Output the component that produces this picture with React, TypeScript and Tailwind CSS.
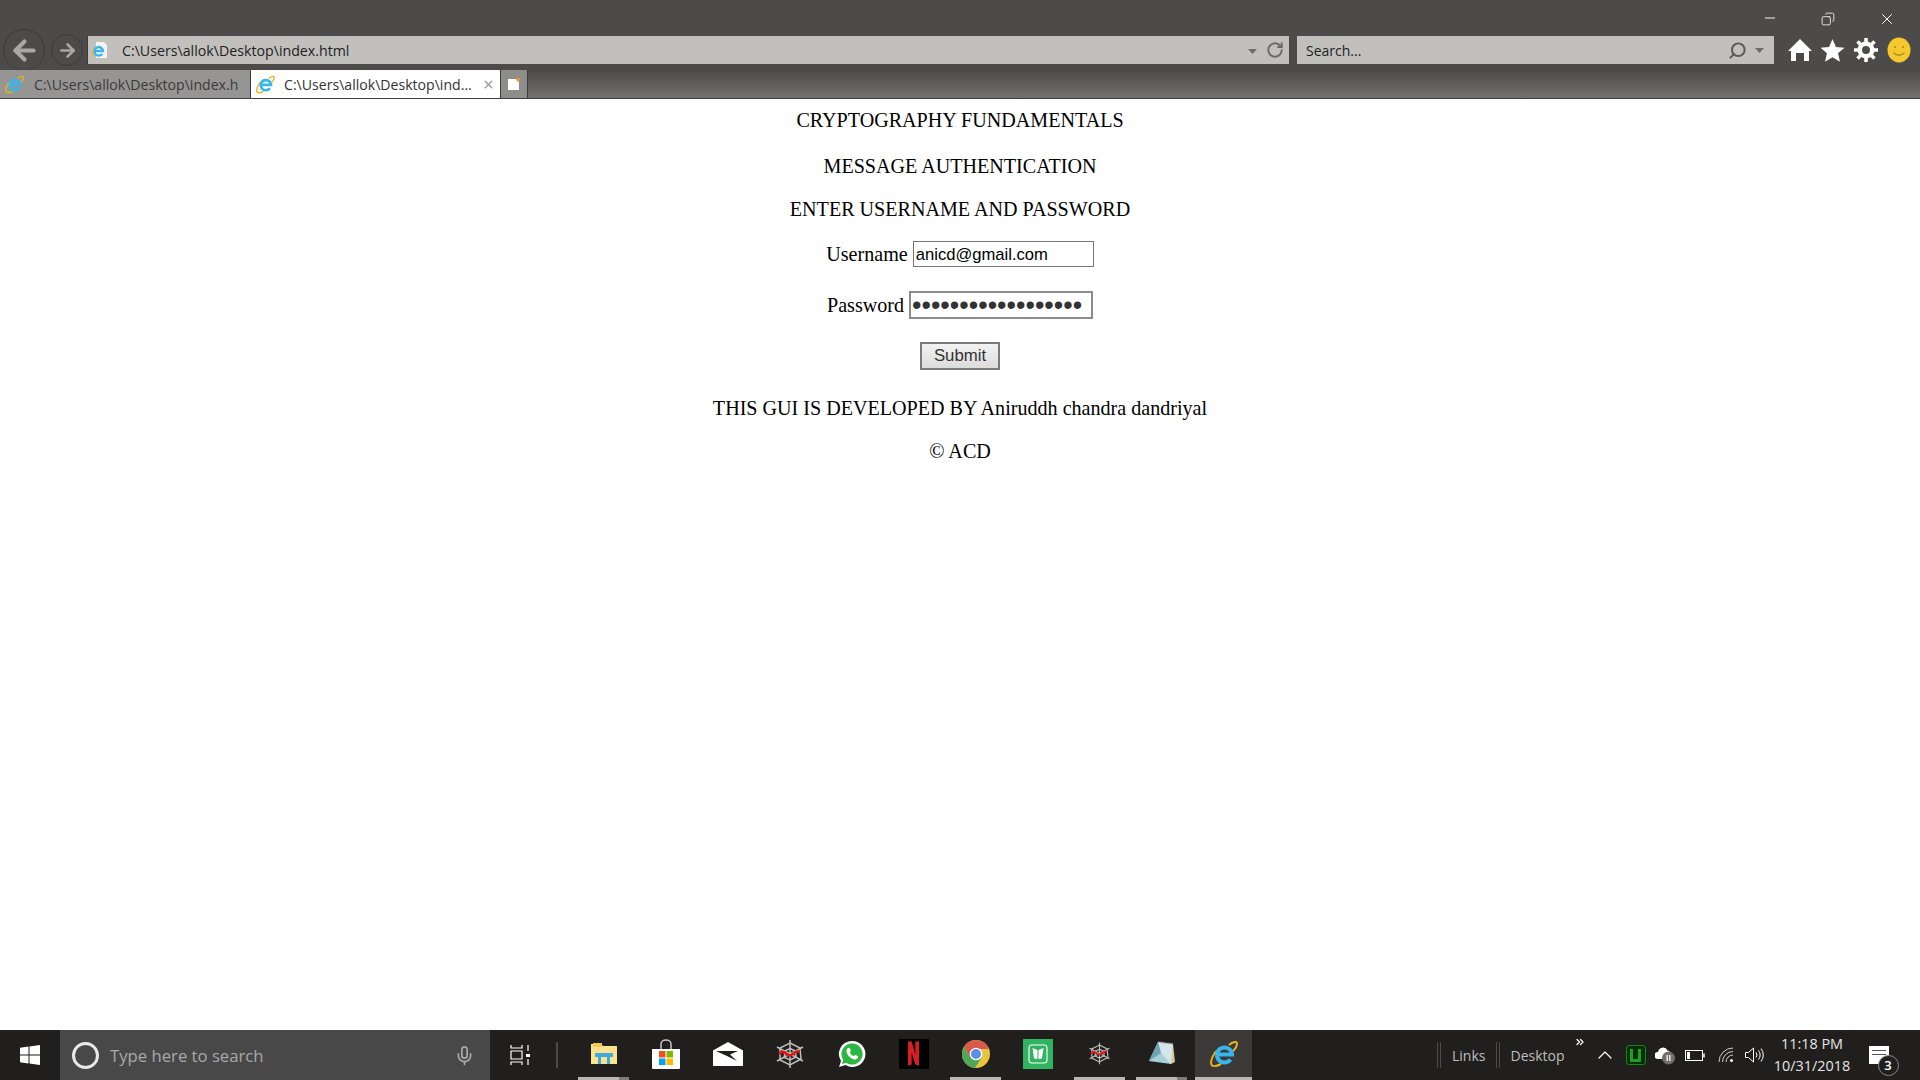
import React from 'react';
import { ArrowLeft, ArrowRight, RotateCw, Search, X, Copy, Minus, ChevronUp, ChevronsRight, Mic } from 'lucide-react';

const SANS = "font-['Open_Sans','Noto_Sans',sans-serif]";

const IeIcon = ({ size = 20 }: { size?: number }) => (
  <svg width={size} height={size} viewBox="0 0 28 28" className="shrink-0">
    <path d="M19 5C23 1.500 27 1 27 3.500 27 6 25 9 23 11M6 11C2 17 0 23 2 25.500 4 27 8 25.500 11 24" fill="none" stroke="#e8b321" strokeWidth="2" />
    <path d="M7.500 14.500H22A7.500 7.500 0 1 0 20.500 19.500" fill="none" stroke="#38b6ec" strokeWidth="4" />
  </svg>
);

const WebIcon = ({ size = 30 }: { size?: number }) => (
  <svg width={size} height={size} viewBox="0 0 30 30">
    <g fill="none" stroke="#bdbdbd" strokeWidth="1.500">
      <path d="M15 1v28M2 8l26 14M28 8 2 22" />
      <path d="M15 4 25 9 26 20 15 26 5 21 5 9z" />
      <path d="M15 9.500 20.500 12 21 18 15 21 9.500 18.500 9.500 12z" />
    </g>
    <path d="M4 15c3-3 5-2.500 7-.5s3.500 3 6 1 5-4 8-3" fill="none" stroke="#e01414" strokeWidth="2.600" />
  </svg>
);

const Tab = ({ active, label, close }: { active?: boolean; label: string; close?: boolean }) => (
  <div className={`flex h-full items-center pl-[5px] ${active ? 'w-[249px] bg-white' : 'w-[250px] bg-[#969594]'}`}>
    <IeIcon size={19} />
    <span className={`whitespace-nowrap pt-[2px] text-[14.100px] ${active ? 'ml-[9px] text-[#333]' : 'ml-[10px] text-[#3a3a3a]'}`}>{label}</span>
    {close && <X size={13} strokeWidth={3} className="ml-[10px] text-[#a3a3a3]" />}
  </div>
);

const TaskApp = ({ children, running, split, active }: { children: React.ReactNode; running?: boolean; split?: boolean; active?: boolean }) => (
  <div className={`flex h-full w-[57px] shrink-0 flex-col items-center ${active ? 'bg-[#3b3a39]' : ''}`}>
    <div className="flex flex-1 items-center justify-center">{children}</div>
    <div className={`flex h-[3px] ${active ? 'w-full' : 'w-[51px]'}`}>
      {running && <div className="h-full flex-1 bg-[#b8b8b6]" />}
      {split && <div className="h-full w-[10px] bg-[#7c7c7a]" />}
    </div>
  </div>
);

export default function App() {
  return (
    <div className={`flex h-[1080px] w-[1920px] flex-col overflow-hidden bg-white ${SANS}`}>
      {/* browser chrome */}
      <div className="flex h-[99px] shrink-0 flex-col border-b border-[#3f3f3d] bg-[linear-gradient(#4c4b49_0%,#4c4b49_72%,#72716f_100%)]">
        <div className="flex h-[36px] shrink-0 items-start justify-end">
          <Minus size={16} strokeWidth={1.400} className="mt-[10px] mr-[43px] text-white" />
          <Copy size={14} strokeWidth={1.400} className="mt-[12px] mr-[43px] -scale-x-100 text-white" />
          <X size={18} strokeWidth={1.300} className="mt-[10px] mr-[24px] text-white" />
        </div>
        <div className="flex h-[28px] shrink-0 items-center">
          <div className="ml-[3px] flex h-[42px] w-[42px] shrink-0 items-center justify-center rounded-full border border-[#3c3b3a]">
            <ArrowLeft size={31} strokeWidth={3.200} className="text-[#a8a8a6]" />
          </div>
          <div className="ml-[6px] flex h-[32px] w-[32px] shrink-0 items-center justify-center rounded-full border border-[#3c3b3a]">
            <ArrowRight size={21} strokeWidth={3} className="text-[#a8a8a6]" />
          </div>
          <div className="ml-[4px] flex h-full w-[1202px] items-center border-l border-[#3c3b3a] bg-[#c1c0bd] pl-[4px]">
            <svg width="16" height="18" viewBox="0 0 16 18" className="shrink-0">
              <path d="M4 1h8l3 3v13H4z" fill="#f4f4f4" />
              <path d="M2.500 10H11a4.300 4.300 0 1 0-.9 3" fill="none" stroke="#38b6ec" strokeWidth="2.400" />
              <path d="M1.500 9C.5 12 .3 15 1.500 15.500" fill="none" stroke="#e8b321" strokeWidth="1.200" />
            </svg>
            <span className="ml-[14px] pt-[2px] text-[14.200px] text-[#222]">C:\Users\allok\Desktop\index.html</span>
            <svg width="9" height="5" viewBox="0 0 9 5" className="mt-[2px] ml-auto"><path d="M0 0h9L4.500 5z" fill="#6b6b69" /></svg>
            <RotateCw size={18} strokeWidth={2.500} className="mr-[5px] ml-[9px] text-[#6b6b69]" />
          </div>
          <div className="ml-[8px] flex h-full w-[477px] items-center bg-[#c1c0bd] pl-[9px]">
            <span className="text-[14px] text-[#222]">Search...</span>
            <Search size={19} strokeWidth={2.500} className="ml-auto -scale-x-100 text-[#5a5a58]" />
            <svg width="9" height="5" viewBox="0 0 9 5" className="mr-[10px] ml-[8px]"><path d="M0 0h9L4.500 5z" fill="#6b6b69" /></svg>
          </div>
          <div className="ml-[14px] flex items-center">
            <svg width="24" height="24" viewBox="0 0 24 24"><path d="M12 1 24 13h-3v10h-5v-8H8v8H3V13H0z" fill="#fff" /></svg>
            <svg width="25" height="25" viewBox="0 0 24 24" className="ml-[8px]"><path d="m12 1 3.300 7.600 8.200.7-6.200 5.400 1.900 8L12 18.400l-7.200 4.300 1.900-8L.5 9.300l8.200-.7z" fill="#fff" /></svg>
            <svg width="24" height="24" viewBox="0 0 24 24" className="ml-[9px]">
              <path d="M12 3.500a8.500 8.500 0 1 0 0 17 8.500 8.500 0 0 0 0-17zm0 4.500a4 4 0 1 1 0 8 4 4 0 0 1 0-8z" fill="#fff" fillRule="evenodd" />
              <path d="M12 0v5M12 19v5M0 12h5M19 12h5M3.500 3.500l3.500 3.500M17 17l3.500 3.500M20.500 3.500 17 7M7 17l-3.500 3.500" stroke="#fff" strokeWidth="3.500" />
            </svg>
            <svg width="24" height="26" viewBox="0 0 24 26" className="ml-[9px]">
              <ellipse cx="12" cy="13" rx="11.500" ry="12.500" fill="#f5c92e" />
              <circle cx="8" cy="10" r="1" fill="#a98a1e" />
              <circle cx="16" cy="10" r="1" fill="#a98a1e" />
              <path d="M6.500 15.500c2.500 3.500 8.500 3.500 11 0" fill="none" stroke="#a98a1e" strokeWidth="1.200" />
            </svg>
          </div>
        </div>
        <div className="mt-[6px] flex h-[28px] shrink-0 items-stretch">
          <Tab label="C:\Users\allok\Desktop\index.h" />
          <div className="w-px bg-[#3c3b3a]" />
          <Tab active close label="C:\Users\allok\Desktop\ind..." />
          <div className="flex w-[28px] items-center justify-center border-r border-l border-[#3c3b3a] bg-[#8e8d8c]">
            <svg width="14" height="14" viewBox="0 0 14 14">
              <path d="M1 2h8l3 3v8H1z" fill="#fff" />
              <path d="m11 0 .7 1.600 1.800.2-1.300 1.200.4 1.800-1.600-.9-1.600.9.400-1.800L8.500 1.800l1.800-.2z" fill="#f0a020" />
            </svg>
          </div>
        </div>
      </div>

      {/* page */}
      <main className="flex flex-1 flex-col items-center font-['Liberation_Serif',serif] text-[20.100px] leading-[22px] text-black">
        <p className="mt-[10px]">CRYPTOGRAPHY FUNDAMENTALS</p>
        <p className="mt-[24px]">MESSAGE AUTHENTICATION</p>
        <p className="mt-[21px]">ENTER USERNAME AND PASSWORD</p>
        <div className="mt-[21px] flex h-[26px] items-center gap-[5px]">
          <label>Username</label>
          <input readOnly value="anicd@gmail.com" className="h-[26px] w-[181px] border border-[#767676] bg-white px-[2px] pt-[2px] font-['Liberation_Sans',sans-serif] text-[16.600px] text-black outline-none" />
        </div>
        <div className="mt-[24px] flex h-[28px] items-center gap-[5px]">
          <label>Password</label>
          <input readOnly type="password" value="aaaaaaaaaaaaaaaaaa" className="h-[28px] w-[184px] border-2 border-[#8c8c8c] bg-white px-[1px] font-['Liberation_Sans',sans-serif] text-[27px] text-[#333] outline-none" />
        </div>
        <button className="mt-[23px] h-[28px] w-[80px] border-2 border-[#7a7a7a] bg-[linear-gradient(#f2f2f2,#dcdcdc)] font-['Liberation_Sans',sans-serif] text-[16.800px] text-[#333]">Submit</button>
        <p className="mt-[27px]">THIS GUI IS DEVELOPED BY Aniruddh chandra dandriyal</p>
        <p className="mt-[21px]">© ACD</p>
      </main>

      {/* taskbar */}
      <div className="flex h-[50px] shrink-0 items-stretch bg-[#211f1e] text-[#d0d0d0]">
        <div className="flex w-[60px] shrink-0 items-center justify-center">
          <svg width="20" height="20" viewBox="0 0 20 20"><path d="M0 2.800 8.500 1.600V9.500H0zM9.500 1.500 20 0v9.500H9.500zM0 10.500h8.500v7.900L0 17.200zM9.500 10.500H20V20L9.500 18.500z" fill="#fff" /></svg>
        </div>
        <div className="flex w-[430px] shrink-0 items-center bg-[#484848] pl-[12px]">
          <div className="h-[27px] w-[27px] rounded-full border-[3px] border-[#e8e8e8]" />
          <span className="ml-[11px] pt-[1px] text-[16.700px] text-[#a8a8a8]">Type here to search</span>
          <Mic size={21} strokeWidth={2} className="mr-[15px] ml-auto text-[#a8a8a8]" />
        </div>
        <div className="ml-[20px] flex shrink-0 items-center">
          <svg width="20" height="22" viewBox="0 0 20 22" fill="none" stroke="#fff" strokeWidth="1.200">
            <path d="M1 1v3h11V1M1 7h11v8H1zM1 21v-3h11v3" />
            <path d="M18 1v6M18 15v6" />
            <rect x="16" y="10" width="4" height="3" fill="#fff" stroke="none" />
          </svg>
          <div className="ml-[26px] h-[26px] w-[2px] border-r border-l border-[#4d4b4a]" />
        </div>
        <div className="ml-[17px] flex shrink-0 gap-[5px]">
          <TaskApp running split>
            <svg width="28" height="23" viewBox="0 0 28 23">
              <path d="M1 2h10l2 2h14v18H1z" fill="#fbe38e" />
              <rect x="3" y="1" width="9" height="4" fill="#f5c74a" />
              <path d="M8 22v-7h-3v-4h18v4h-3v7h-3v-7H11v7z" fill="#3fa9e0" />
            </svg>
          </TaskApp>
          <TaskApp>
            <svg width="30" height="30" viewBox="0 0 30 30">
              <path d="M1 10h28v19a1 1 0 0 1-1 1H2a1 1 0 0 1-1-1z" fill="#fff" />
              <path d="M10 10V5a5 4 0 0 1 10 0v5" fill="none" stroke="#c8c8c8" strokeWidth="1.500" />
              <rect x="8" y="12" width="6.500" height="6.500" fill="#f25022" />
              <rect x="15.500" y="12" width="6.500" height="6.500" fill="#7fba00" />
              <rect x="8" y="19.500" width="6.500" height="6.500" fill="#00a4ef" />
              <rect x="15.500" y="19.500" width="6.500" height="6.500" fill="#ffb900" />
            </svg>
          </TaskApp>
          <TaskApp>
            <svg width="30" height="24" viewBox="0 0 30 24">
              <path d="M15 0 30 8.500V24H0V8.500z" fill="#fff" />
              <path d="M3 9 25 9 17 12.500 24 19 14 14z" fill="#211f1e" />
            </svg>
          </TaskApp>
          <TaskApp><WebIcon /></TaskApp>
          <TaskApp>
            <svg width="28" height="28" viewBox="0 0 28 28">
              <path d="M14 1a13 13 0 0 0-11 20L1 27l6.500-2A13 13 0 1 0 14 1z" fill="#fff" />
              <path d="M14 3.500a10.500 10.500 0 0 0-8.800 16.200L4 24l4.200-1.300A10.500 10.500 0 1 0 14 3.500z" fill="#2bb741" />
              <path d="M10 8c1-.6 1.600-.4 2 .5l.8 2c.2.600-.6 1.400-1 2 .8 1.600 2 2.800 3.800 3.600.7-.5 1.300-1.400 2-1.100l2 1c.8.400.7 1.200.2 2-.8 1.300-2.600 1.800-4.200 1.300-3.400-1-6.100-3.700-7-7-.4-1.800.2-3.300 1.400-4.300z" fill="#fff" />
            </svg>
          </TaskApp>
          <TaskApp>
            <div className="flex h-[30px] w-[30px] items-center justify-center bg-black">
              <svg width="11" height="25" viewBox="0 0 12 26"><path d="M0 0h4l4 14V0h4v26l-4-1L4 12v13l-4 1z" fill="#d81f26" /></svg>
            </div>
          </TaskApp>
          <TaskApp running>
            <svg width="28" height="28" viewBox="0 0 28 28">
              <circle cx="14" cy="14" r="14" fill="#e9c33b" />
              <path d="M14 0a14 14 0 0 0-12 6.800L8.500 18 14 9h12.800A14 14 0 0 0 14 0z" fill="#d8584a" />
              <path d="M2 6.800A14 14 0 0 0 13 28l6.500-10.200L8.500 18z" fill="#4fa65a" />
              <circle cx="14" cy="14" r="6.300" fill="#fff" />
              <circle cx="14" cy="14" r="5" fill="#5a8fe8" />
            </svg>
          </TaskApp>
          <TaskApp>
            <div className="flex h-[30px] w-[30px] items-center justify-center bg-[#2fb35f]">
              <svg width="20" height="20" viewBox="0 0 20 20" fill="none" stroke="#fff" strokeWidth="1.100">
                <rect x="1" y="1" width="18" height="18" rx="3" />
                <path d="M4.500 4 9.500 6V15L6 14.500zM15.500 4l-5 2V15l3.500-.5z" fill="#fff" stroke="none" />
              </svg>
            </div>
          </TaskApp>
          <TaskApp running><WebIcon size={23} /></TaskApp>
          <TaskApp running split>
            <svg width="28" height="28" viewBox="0 0 28 28">
              <path d="M11 2 25 4l2 18-4 2z" fill="#d8c68a" />
              <path d="M10 2 25 4 23 24 1 21z" fill="#a8cfd8" />
              <path d="M10 2 25 4 23 24 13 13z" fill="#d4e6ea" />
              <path d="M10 2 1 21l12-8z" fill="#6ea3b3" />
              <path d="M10 2 25 4" stroke="#8c8c8c" strokeWidth="1.500" strokeDasharray="1 1" />
            </svg>
          </TaskApp>
          <TaskApp running active><IeIcon size={28} /></TaskApp>
        </div>

        {/* tray */}
        <div className="ml-[185px] flex shrink-0 items-center text-[14px]">
          <div className="h-[26px] w-[4px] border-r border-l border-[#4d4b4a]" />
          <span className="ml-[11px] text-[#bdbdbd]">Links</span>
          <div className="ml-[11px] h-[26px] w-[4px] border-r border-l border-[#4d4b4a]" />
          <span className="ml-[10px] text-[#bdbdbd]">Desktop</span>
          <ChevronsRight size={12} strokeWidth={2.500} className="mb-[26px] ml-[9px] text-white" />
          <ChevronUp size={24} strokeWidth={1.200} className="ml-[7px] text-white" />
          <div className="ml-[9px] flex h-[20px] w-[20px] items-center justify-center rounded-[3px] border border-[#0f8a0f] bg-[#062c06]">
            <div className="h-[13px] w-[11px] border-r-[3px] border-b-[3px] border-l-[3px] border-[#1ea21e]" />
          </div>
          <svg width="20" height="20" viewBox="0 0 20 20" className="ml-[9px]">
            <path d="M3 14a3.500 3.500 0 0 1 0-7 5 5 0 0 1 9.500-1.500A4 4 0 0 1 16 10v4z" fill="#fff" />
            <circle cx="13.500" cy="13" r="6.500" fill="#6f6f6f" />
            <path d="M11.500 10h1.300v6h-1.300zM14.200 10h1.300v6h-1.300z" fill="#fff" />
          </svg>
          <svg width="20" height="11" viewBox="0 0 20 11" fill="none" stroke="#fff" className="ml-[10px]">
            <rect x=".5" y=".5" width="17" height="10" />
            <rect x="2" y="2" width="3" height="7" fill="#fff" stroke="none" />
            <path d="M19 3.500v4" strokeWidth="1.500" />
          </svg>
          <svg width="16" height="16" viewBox="0 0 16 16" fill="none" stroke="#cfcfcf" className="ml-[13px]">
            <path d="M1 15a14 14 0 0 1 14-14M4.500 15A10.500 10.500 0 0 1 15 4.500M8 15a7 7 0 0 1 7-7" />
            <circle cx="13.500" cy="13.500" r="1.500" fill="#fff" stroke="none" />
          </svg>
          <svg width="20" height="16" viewBox="0 0 20 16" fill="none" stroke="#fff" className="ml-[11px]">
            <path d="M.5 5.500h3l5-4.500v14l-5-4.500h-3z" />
            <path d="M11 5.500a4 4 0 0 1 0 5M13.500 3.500a7 7 0 0 1 0 9M16 1.500a10.500 10.500 0 0 1 0 13" />
          </svg>
          <div className="ml-[10px] flex w-[75px] flex-col items-center whitespace-nowrap text-[14.400px] leading-[22px] text-[#e4e4e4]">
            <span>11:18 PM</span>
            <span>10/31/2018</span>
          </div>
          <div className="relative ml-[19px] h-[18px] w-[20px] bg-white">
            <div className="mx-[3px] mt-[4px] h-[1px] bg-[#555]" />
            <div className="mx-[3px] mt-[3px] h-[1px] bg-[#555]" />
            <div className="absolute top-[9px] left-[9px] flex h-[21px] w-[21px] items-center justify-center rounded-full border border-[#8a8a8a] bg-[#211f1e] text-[13px] font-semibold text-white">3</div>
          </div>
        </div>
      </div>
    </div>
  );
}
